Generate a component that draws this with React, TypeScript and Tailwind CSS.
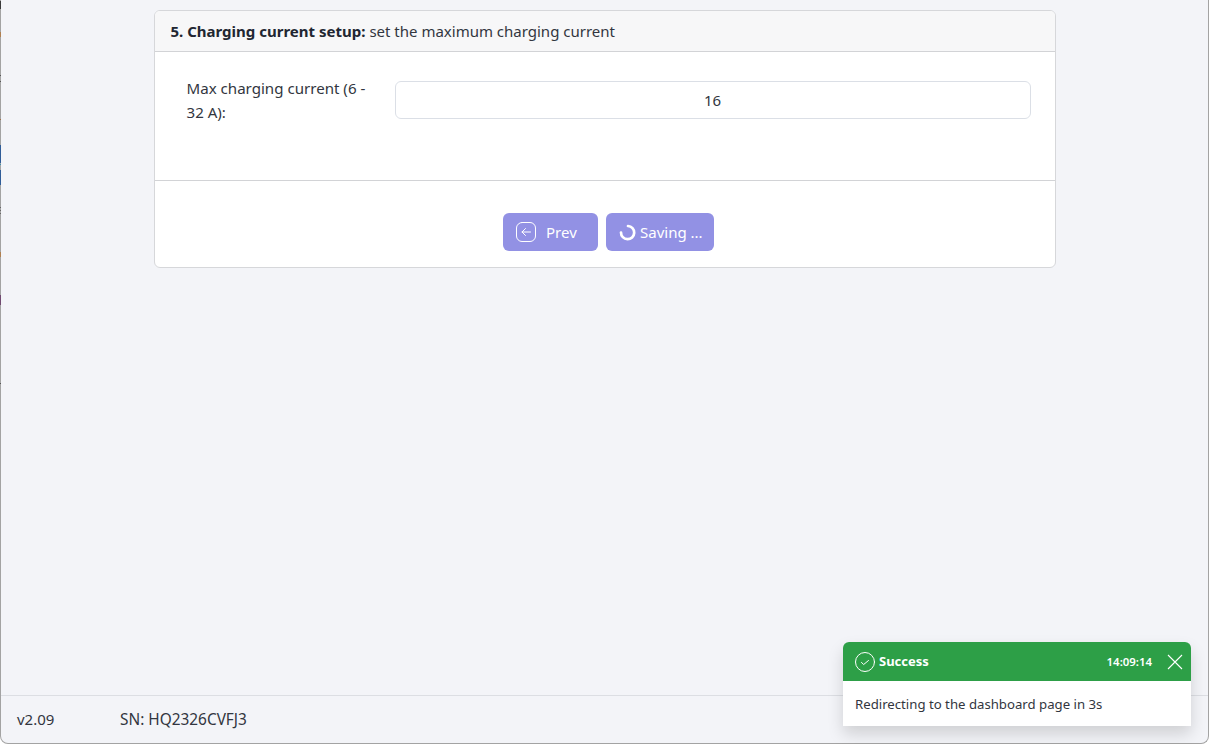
import React from "react";

const streaks: [number, number, string][] = [
  [1, 8, "#3a3a3a"],
  [32, 5, "#b08050"],
  [75, 1, "#555555"],
  [81, 1, "#555555"],
  [119, 1, "#a07048"],
  [145, 18, "#2f5c98"],
  [164, 1, "#3a90b0"],
  [170, 15, "#2f5c98"],
  [207, 1, "#666666"],
  [210, 1, "#666666"],
  [213, 1, "#666666"],
  [252, 5, "#b08050"],
  [295, 10, "#704a70"],
  [383, 1, "#555555"],
];

export default function App() {
  return (
    <div className="relative h-[744px] w-[1209px] overflow-hidden bg-white font-['Noto_Sans',sans-serif] text-[#212631]">
      <div className="flex h-[744px] w-[1209px] flex-col rounded-b-lg border-x border-b border-[#a3a3a3] bg-[#f3f4f8]">
        <main className="flex-1 pt-[10px]">
          <section className="mx-auto w-[902px] overflow-hidden rounded-md border border-[#d6d7da] bg-white">
            <header className="flex h-[41px] items-center border-b border-[#d2d3d6] bg-[#f7f7f8] pl-[16px] text-[15px]">
              <b className="mr-[4px] font-bold">5. Charging current setup:</b>
              <span className="text-[#323640]">set the maximum charging current</span>
            </header>
            <div className="flex h-[129px] items-start gap-[16px] border-b border-[#d2d3d6] pl-8 pr-6 pt-[24px]">
              <label className="w-[192px] text-[15.1px] leading-[24px] text-[#323640]">
                Max charging current (6 - 32 A):
              </label>
              <input
                readOnly
                value="16"
                className="mt-[5px] h-[38px] flex-1 rounded-md border border-[#dbdfe6] bg-white text-center text-[15px] text-[#323640]"
              />
            </div>
            <div className="flex h-[86px] items-start justify-center gap-2 pl-2 pt-[32px]">
              <button className="flex h-[38px] w-[95px] items-center gap-[10px] rounded-md bg-[#9291e4] pl-[13px] text-[15px] text-white">
                <svg width="20" height="20" viewBox="0 0 20 20" fill="none" stroke="currentColor" strokeWidth="1" strokeLinecap="round" strokeLinejoin="round">
                  <rect x="0.5" y="0.5" width="19" height="19" rx="5.5" />
                  <path d="M14.5 10H6M9.5 6.5L6 10l3.5 3.5" />
                </svg>
                Prev
              </button>
              <button className="flex h-[38px] w-[108px] items-center gap-[4px] rounded-md bg-[#9291e4] pl-[13px] text-[15px] text-white">
                <svg width="17" height="17" viewBox="0 0 17 17" fill="none" stroke="currentColor" strokeWidth="2.7" strokeLinecap="round">
                  <path d="M9 2A6.6 6.6 0 1 1 2 8.5" />
                </svg>
                Saving ...
              </button>
            </div>
          </section>
        </main>
        <footer className="flex h-[48px] items-center border-t border-[#dcdee3] pl-4 text-[15px] text-[#323640]">
          <span className="w-[103px]">v2.09</span>
          <span className="text-[15.4px]">SN: HQ2326CVFJ3</span>
        </footer>
      </div>

      {streaks.map(([y, h, c]) => (
        <i key={y} className="absolute left-0 w-px" style={{ top: y, height: h, background: c }} />
      ))}

      <aside className="absolute left-[843px] top-[642px] w-[348px] overflow-hidden rounded-t-md bg-white shadow-[0_8px_16px_rgba(0,0,0,0.15)]">
        <div className="flex h-[39px] items-center bg-[#2d9f47] pl-[12px] pr-[8px] text-white">
          <svg width="20" height="20" viewBox="0 0 20 20" fill="none" stroke="currentColor" strokeWidth="1" strokeLinecap="round" strokeLinejoin="round">
            <circle cx="10" cy="10" r="9.5" />
            <path d="M6.5 10.5l2.2 2 4.8-4" />
          </svg>
          <b className="ml-[4px] flex-1 text-[13px] font-bold">Success</b>
          <span className="text-[11.4px] font-semibold">14:09:14</span>
          <svg className="ml-[15px]" width="16" height="16" viewBox="0 0 16 16" stroke="currentColor" strokeWidth="1.1" fill="none">
            <path d="M1 1l14 14M15 1L1 15" />
          </svg>
        </div>
        <div className="flex h-[45px] items-center px-[12px] pt-[2px] text-[13.2px] text-[#323640]">
          Redirecting to the dashboard page in 3s
        </div>
      </aside>
    </div>
  );
}
